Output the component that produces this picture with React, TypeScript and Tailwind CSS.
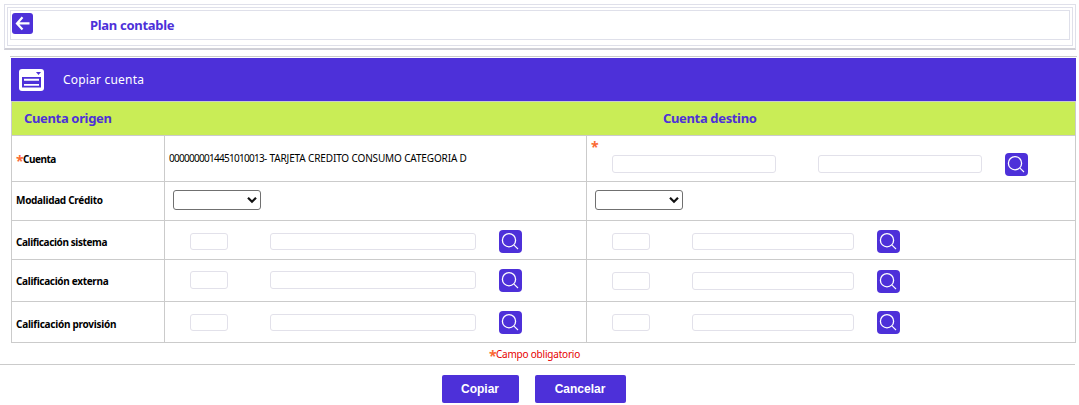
import type { ReactNode } from "react";

function SearchButton({ className = "" }: { className?: string }) {
  return (
    <button aria-label="Buscar" className={`h-[23px] w-[23px] shrink-0 rounded-[4px] bg-[#4d30d9] ${className}`}>
      <svg width="23" height="23" viewBox="0 0 23 23" fill="none" stroke="#fff">
        <circle cx="10" cy="10.2" r="6.6" strokeWidth="1.3" />
        <path d="M15 15.2 19 19" strokeWidth="1.1" />
      </svg>
    </button>
  );
}

function Asterisk({ className = "" }: { className?: string }) {
  return <span className={`inline-block w-[7px] align-[-3px] text-[14px] leading-[10px] font-bold text-[#fa6a35] ${className}`}>*</span>;
}

function Field({ className }: { className: string }) {
  return <input className={`shrink-0 rounded-[3px] border border-[#e2e1ea] bg-white ${className}`} />;
}

function Select() {
  return (
    <div className="relative mt-[8px] ml-[8px] h-[20px] w-[88px]">
      <select className="block h-full w-full appearance-none rounded-[3px] border border-[#707070] bg-white" />
      <svg className="pointer-events-none absolute top-[6px] right-[4px]" width="10" height="8" viewBox="0 0 10 8" fill="none" stroke="#111" strokeWidth="2.2">
        <path d="M1 1.7 5 5.7 9 1.7" />
      </svg>
    </div>
  );
}

function Row({ height, label, labelClass, left, right }: { height: string; label: ReactNode; labelClass: string; left: ReactNode; right: ReactNode }) {
  return (
    <div className={`flex border-b border-[#cbcbcb] ${height}`}>
      <div className="w-[153px] shrink-0 border-r border-[#cbcbcb]">
        <div className={`ml-[4px] whitespace-nowrap text-[10px] leading-[14px] font-bold text-black ${labelClass}`}>{label}</div>
      </div>
      <div className="flex w-[422px] shrink-0 items-start border-r border-[#cbcbcb]">{left}</div>
      <div className="flex flex-1 items-start">{right}</div>
    </div>
  );
}

export default function App() {
  return (
    <div className="h-[405px] w-[1079px] overflow-hidden bg-white pt-1 font-['Noto_Sans',sans-serif]">
      <header className="ml-1 h-[46px] w-[1072px] border border-b-2 border-[#dfe0ea] border-b-[#cfcfd7] p-[2px]">
        <div className="h-[39px] border border-[#dfe0ea] p-[2px]">
          <div className="flex h-[30px] items-start border border-[#dfe0ea]">
            <button aria-label="Volver" className="mt-[2px] ml-px h-[21px] w-[21px] rounded-[3px] bg-[#4d30d9]">
              <svg width="21" height="21" viewBox="0 0 21 21" fill="none" stroke="#fff" strokeWidth="2.2">
                <path d="M10.5 4.3 5 10.4l5.5 6M5 10.4h12.5" />
              </svg>
            </button>
            <h1 className="mt-[5px] ml-[57px] text-[13px] leading-[18px] font-bold tracking-[-0.3px] text-[#4d30d9]">Plan contable</h1>
          </div>
        </div>
      </header>

      <div className="mt-[6px] ml-[10px] h-px w-[1067px] bg-[#cbcbcb]" />

      <main className="mt-px ml-[11px] w-[1065px]">
        <div className="flex h-[43px] items-center bg-[#4d30d9]">
          <svg className="ml-[8px]" width="25" height="22" viewBox="0 0 25 22">
            <rect width="25" height="22" rx="3" fill="#fff" />
            <path d="M17 3h5l-2.5 3z" fill="#4d30d9" />
            <path d="M3 8h19v10.5H3z" fill="#4d30d9" />
            <path d="M5 10.8h15M5 15.9h15" stroke="#fff" strokeWidth="1.9" />
          </svg>
          <h2 className="ml-[19px] text-[12px] leading-[16px] tracking-[0.2px] text-white">Copiar cuenta</h2>
        </div>
        <div className="border border-b-0 border-[#cbcbcb]">
          <div className="flex h-[34px] border-b border-[#cbcbcb] bg-[#c9ed56] text-[13px] leading-[18px] font-bold tracking-[-0.35px] text-[#4d30d9]">
            <h3 className="mt-[7px] ml-[12px] w-[639px]">Cuenta origen</h3>
            <h3 className="mt-[7px]">Cuenta destino</h3>
          </div>
          <Row
            height="h-[46px]"
            label={<><Asterisk />Cuenta</>}
            labelClass="mt-[16px] tracking-[-0.5px]"
            left={
              <span className="mt-[15px] ml-[4px] whitespace-nowrap text-[10px] leading-[14px] text-black">
                <span className="tracking-[-0.72px]">0000000014451010013</span>
                <span className="tracking-[-0.14px]">- TARJETA CREDITO CONSUMO CATEGORIA D</span>
              </span>
            }
            right={
              <>
                <Asterisk className="mt-[6px] mr-[14px] ml-[4px]" />
                <Field className="mt-[19px] h-[18px] w-[164px]" />
                <Field className="mt-[19px] ml-[42px] h-[18px] w-[164px]" />
                <SearchButton className="mt-[17px] ml-[23px]" />
              </>
            }
          />
          <Row height="h-[39px]" label="Modalidad Crédito" labelClass="mt-[11px] tracking-[-0.3px]" left={<Select />} right={<Select />} />
          <Row
            height="h-[39px]"
            label="Calificación sistema"
            labelClass="mt-[14px] tracking-[-0.4px]"
            left={
              <>
                <Field className="mt-[12px] ml-[25px] h-[17px] w-[38px]" />
                <Field className="mt-[12px] ml-[42px] h-[17px] w-[206px]" />
                <SearchButton className="mt-[9px] ml-[23px]" />
              </>
            }
            right={
              <>
                <Field className="mt-[12px] ml-[25px] h-[17px] w-[38px]" />
                <Field className="mt-[12px] ml-[42px] h-[17px] w-[162px]" />
                <SearchButton className="mt-[9px] ml-[23px]" />
              </>
            }
          />
          <Row
            height="h-[42px]"
            label="Calificación externa"
            labelClass="mt-[14px] tracking-[-0.32px]"
            left={
              <>
                <Field className="mt-[11px] ml-[25px] h-[18px] w-[38px]" />
                <Field className="mt-[11px] ml-[42px] h-[18px] w-[206px]" />
                <SearchButton className="mt-[9px] ml-[23px]" />
              </>
            }
            right={
              <>
                <Field className="mt-[12px] ml-[25px] h-[18px] w-[38px]" />
                <Field className="mt-[12px] ml-[42px] h-[18px] w-[162px]" />
                <SearchButton className="mt-[10px] ml-[23px]" />
              </>
            }
          />
          <Row
            height="h-[41px]"
            label="Calificación provisión"
            labelClass="mt-[15px] tracking-[-0.26px]"
            left={
              <>
                <Field className="mt-[12px] ml-[25px] h-[17px] w-[38px]" />
                <Field className="mt-[12px] ml-[42px] h-[17px] w-[206px]" />
                <SearchButton className="mt-[9px] ml-[23px]" />
              </>
            }
            right={
              <>
                <Field className="mt-[12px] ml-[25px] h-[17px] w-[38px]" />
                <Field className="mt-[12px] ml-[42px] h-[17px] w-[162px]" />
                <SearchButton className="mt-[9px] ml-[23px]" />
              </>
            }
          />
        </div>
      </main>

      <p className="h-[21px] w-[1069px] pt-[4px] text-center text-[10px] leading-[14px] tracking-[-0.2px] text-[#e60000]">
        <Asterisk />Campo obligatorio
      </p>
      <div className="h-px w-[1075px] bg-[#cbcbcb]" />
      <div className="mt-[10px] ml-[442px] flex gap-4 font-['Liberation_Sans',sans-serif] text-[12px] font-bold text-white">
        <button className="h-[28px] w-[77px] rounded-[2px] bg-[#4d30d9] pr-px">Copiar</button>
        <button className="h-[28px] w-[91px] rounded-[2px] bg-[#4d30d9] pr-px">Cancelar</button>
      </div>
    </div>
  );
}
